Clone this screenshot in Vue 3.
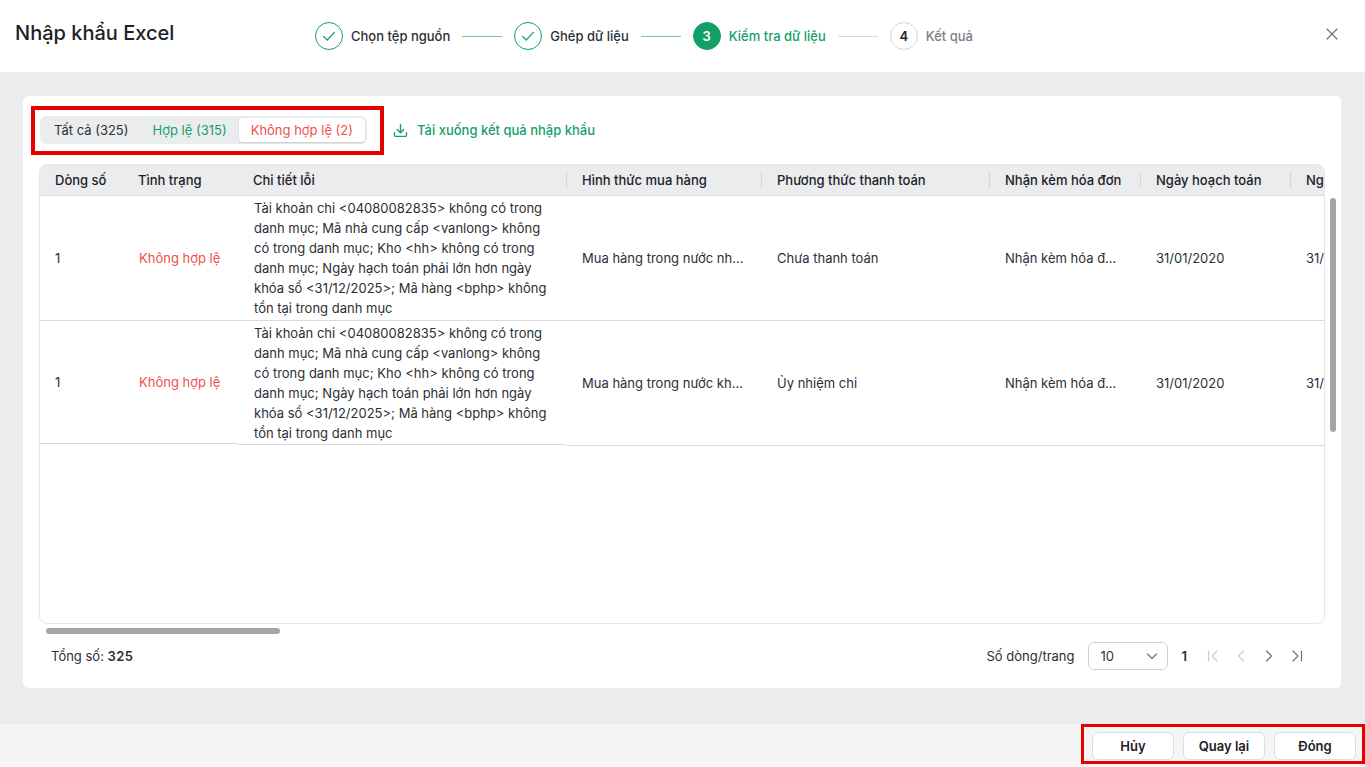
<template>
  <div class="page">
    <header class="top">
      <h1 class="title">Nhập khẩu Excel</h1>
      <div class="steps">
        <template v-for="(s, i) in steps" :key="s.label">
          <div class="step" :class="s.state">
            <span class="dot">
              <svg v-if="s.state === 'done'" width="16" height="16" viewBox="0 0 16 16" fill="none">
                <path d="M2.6 8.4l3.6 3.6 7.2-7.6" stroke="#16a06b" stroke-width="1.3" stroke-linecap="round" stroke-linejoin="round" />
              </svg>
              <template v-else>{{ i + 1 }}</template>
            </span>
            <span class="step-label">{{ s.label }}</span>
          </div>
          <span v-if="i < steps.length - 1" class="step-line" :class="s.state"></span>
        </template>
      </div>
      <button class="close" aria-label="Đóng">
        <svg width="12" height="12" viewBox="0 0 12 12" fill="none">
          <path d="M1 1l10 10M11 1L1 11" stroke="#6f737b" stroke-width="1.2" stroke-linecap="round" />
        </svg>
      </button>
    </header>

    <main class="main">
      <section class="card">
        <div class="toolbar">
          <div class="tabs">
            <span class="tab">Tất cả (325)</span>
            <span class="tab ok">Hợp lệ (315)</span>
            <span class="tab bad active">Không hợp lệ (2)</span>
          </div>
          <a class="download">
            <svg width="15" height="15" viewBox="0 0 15 15" fill="none">
              <path d="M7.5 1.5v8M4.2 6.4l3.3 3.3 3.3-3.3M1.5 9.8v2.4c0 .7.5 1.2 1.2 1.2h9.6c.7 0 1.2-.5 1.2-1.2V9.8" stroke="#16a06b" stroke-width="1.4" stroke-linecap="round" stroke-linejoin="round" />
            </svg>
            Tải xuống kết quả nhập khẩu
          </a>
        </div>

        <div class="table">
          <div class="thead">
            <div v-for="c in columns" :key="c.label" class="th" :class="{ sep: c.sep }" :style="{ width: c.width + 'px' }">
              {{ c.label }}
            </div>
          </div>
          <div v-for="(r, ri) in rows" :key="ri" class="row" :class="{ last: ri === rows.length - 1 }">
            <div class="td frozen" :style="{ width: columns[0].width + 'px' }">{{ r.line }}</div>
            <div class="td frozen invalid" :style="{ width: columns[1].width + 'px' }">{{ r.status }}</div>
            <div class="td detail" :style="{ width: columns[2].width + 'px' }">{{ errorText }}</div>
            <div class="td" :style="{ width: columns[3].width + 'px' }"><span class="clip">{{ r.buy }}</span></div>
            <div class="td" :style="{ width: columns[4].width + 'px' }"><span class="clip">{{ r.pay }}</span></div>
            <div class="td" :style="{ width: columns[5].width + 'px' }"><span class="clip">Nhận kèm hóa đơn mua hàng</span></div>
            <div class="td" :style="{ width: columns[6].width + 'px' }"><span class="clip">31/01/2020</span></div>
            <div class="td" :style="{ width: columns[7].width + 'px' }"><span class="clip">31/01/2020</span></div>
          </div>
        </div>

        <div class="pager">
          <div class="total">Tổng số: <b>325</b></div>
          <div class="pager-right">
            <span>Số dòng/trang</span>
            <div class="select">
              <span>10</span>
              <svg width="12" height="12" viewBox="0 0 12 12" fill="none">
                <path d="M1.5 4l4.5 4.5L10.500 4" stroke="#6f737b" stroke-width="1.2" stroke-linecap="round" stroke-linejoin="round" />
              </svg>
            </div>
            <b class="page-no">1</b>
            <div class="nav">
              <svg width="16" height="16" viewBox="0 0 16 16" fill="none">
                <path d="M3.500 3v10M12 3L7 8l5 5" stroke="#c9cbcf" stroke-width="1.200" stroke-linecap="round" stroke-linejoin="round" />
              </svg>
              <svg width="16" height="16" viewBox="0 0 16 16" fill="none">
                <path d="M10.500 3l-5 5 5 5" stroke="#c9cbcf" stroke-width="1.200" stroke-linecap="round" stroke-linejoin="round" />
              </svg>
              <svg width="16" height="16" viewBox="0 0 16 16" fill="none">
                <path d="M5.500 3l5 5-5 5" stroke="#6f737b" stroke-width="1.200" stroke-linecap="round" stroke-linejoin="round" />
              </svg>
              <svg width="16" height="16" viewBox="0 0 16 16" fill="none">
                <path d="M12.500 3v10M4 3l5 5-5 5" stroke="#6f737b" stroke-width="1.200" stroke-linecap="round" stroke-linejoin="round" />
              </svg>
            </div>
          </div>
        </div>

        <span class="bar-v"></span>
        <span class="bar-h"></span>
      </section>
    </main>

    <footer class="bottom">
      <button class="btn">Hủy</button>
      <button class="btn">Quay lại</button>
      <button class="btn">Đóng</button>
    </footer>

    <div class="mark mark-tabs"></div>
    <div class="mark mark-actions"></div>
  </div>
</template>

<script setup>
const steps = [
  { label: 'Chọn tệp nguồn', state: 'done' },
  { label: 'Ghép dữ liệu', state: 'done' },
  { label: 'Kiểm tra dữ liệu', state: 'current' },
  { label: 'Kết quả', state: 'todo' },
]

const columns = [
  { label: 'Dòng số', width: 83 },
  { label: 'Tình trạng', width: 115 },
  { label: 'Chi tiết lỗi', width: 328 },
  { label: 'Hình thức mua hàng', width: 195, sep: true },
  { label: 'Phương thức thanh toán', width: 228, sep: true },
  { label: 'Nhận kèm hóa đơn', width: 151, sep: true },
  { label: 'Ngày hoạch toán', width: 150, sep: true },
  { label: 'Ngày chứng từ', width: 150, sep: true },
]

const errorText =
  'Tài khoản chi <04080082835> không có trong danh mục; Mã nhà cung cấp <vanlong> không có trong danh mục; Kho <hh> không có trong danh mục; Ngày hạch toán phải lớn hơn ngày khóa sổ <31/12/2025>; Mã hàng <bphp> không tồn tại trong danh mục'

const rows = [
  { line: 1, status: 'Không hợp lệ', buy: 'Mua hàng trong nước nhập kho', pay: 'Chưa thanh toán' },
  { line: 1, status: 'Không hợp lệ', buy: 'Mua hàng trong nước không qua kho', pay: 'Ủy nhiệm chi' },
]
</script>

<style>
html,
body {
  margin: 0;
  background: #ebecee;
}
</style>

<style scoped>
.page {
  position: relative;
  display: flex;
  flex-direction: column;
  height: 767px;
  overflow: hidden;
  font-family: Inter, "Liberation Sans", sans-serif;
  font-size: 13px;
  color: #2b2f36;
}

.top {
  display: flex;
  height: 72px;
  flex: none;
  background: #fff;
  padding: 22px 27px 0 15px;
  box-sizing: border-box;
}

.title {
  width: 300px;
  margin: 0;
  font-size: 20px;
  line-height: 22px;
  font-weight: 500;
  color: #1d2128;
}

.steps {
  display: flex;
  align-items: flex-start;
  flex: 1;
}

.step {
  display: flex;
  align-items: center;
  gap: 8px;
  font-weight: 500;
}

.dot {
  display: flex;
  align-items: center;
  justify-content: center;
  width: 28px;
  height: 28px;
  box-sizing: border-box;
  border-radius: 50%;
  border: 1px solid #16a06b;
  font-weight: 600;
}

.step.current .dot {
  background: #12a066;
  color: #fff;
}

.step.todo .dot {
  border-color: #d5d6da;
  color: #1d2128;
}

.step.current .step-label {
  color: #16a06b;
}

.step.todo .step-label {
  color: #7b7f87;
}

.step-line {
  width: 40px;
  height: 1px;
  margin: 13.500px 12px 0;
  background: #d9dadd;
}

.step-line.done {
  background: #73c7a4;
}

.close {
  width: 12px;
  height: 12px;
  margin-top: 6px;
  padding: 0;
  border: none;
  background: none;
  display: flex;
}

.main {
  flex: 1;
  padding: 24px 24px 36px 23px;
  min-height: 0;
}

.card {
  position: relative;
  height: 100%;
  box-sizing: border-box;
  padding: 20px 16px 0;
  background: #fff;
  border-radius: 6px;
}

.toolbar {
  display: flex;
  align-items: center;
  height: 28px;
  gap: 26px;
}

.tabs {
  display: flex;
  align-items: center;
  height: 28px;
  box-sizing: border-box;
  padding: 2px;
  margin-left: 1px;
  border-radius: 6px;
  background: #ebecee;
}

.tab {
  padding: 0 12px;
  line-height: 24px;
  border-radius: 4px;
}

.tab.ok {
  color: #16a06b;
}

.tab.bad {
  color: #f0504a;
}

.tab.active {
  background: #fff;
  box-shadow: 0 1px 2px rgba(0, 0, 0, 0.14);
}

.download {
  display: flex;
  align-items: center;
  gap: 9px;
  color: #16a06b;
  font-weight: 500;
}

.table {
  height: 460px;
  margin-top: 20px;
  box-sizing: border-box;
  border: 1px solid #e6e7e9;
  border-radius: 8px;
  overflow: hidden;
}

.thead {
  display: flex;
  height: 31px;
  background: #ebecee;
  box-shadow: inset 0 -1px 0 #d8d9dd;
  width: max-content;
}

.th {
  position: relative;
  flex: none;
  box-sizing: border-box;
  padding: 0 15px;
  line-height: 31px;
  font-weight: 500;
  color: #1d2128;
  white-space: nowrap;
  overflow: hidden;
}

.th.sep {
  padding-left: 16px;
}

.th.sep::before {
  content: "";
  position: absolute;
  left: 0;
  top: 7px;
  bottom: 8px;
  width: 1px;
  background: #d5d6da;
}

.row {
  display: flex;
  align-items: flex-start;
  width: max-content;
}

.td {
  flex: none;
  display: flex;
  align-items: center;
  height: 125px;
  box-sizing: border-box;
  padding: 0 16px;
  border-bottom: 1px solid #d9dade;
}

.td.frozen:first-child {
  padding-left: 15px;
}

.row.last .td.frozen {
  height: 123px;
}

.row.last .td.detail {
  height: 124px;
}

.td.detail {
  line-height: 20px;
}

.invalid {
  color: #f0504a;
}

.clip {
  white-space: nowrap;
  overflow: hidden;
  text-overflow: ellipsis;
}

.pager {
  display: flex;
  align-items: center;
  justify-content: space-between;
  height: 28px;
  margin-top: 18px;
  padding: 0 20px 0 12px;
}

.total b {
  font-weight: 600;
  letter-spacing: 0.4px;
}

.pager-right {
  display: flex;
  align-items: center;
}

.select {
  display: flex;
  align-items: center;
  justify-content: space-between;
  width: 80px;
  height: 28px;
  box-sizing: border-box;
  margin-left: 13px;
  padding: 0 9px 0 12px;
  border: 1px solid #cfd1d5;
  border-radius: 6px;
}

.page-no {
  margin-left: 14px;
  font-weight: 600;
}

.nav {
  display: flex;
  gap: 12px;
  margin-left: 18px;
}

.bar-v {
  position: absolute;
  left: 1307px;
  top: 102px;
  width: 6px;
  height: 234px;
  border-radius: 3px;
  background: #a5a5a5;
}

.bar-h {
  position: absolute;
  left: 23px;
  top: 532px;
  width: 234px;
  height: 6px;
  border-radius: 3px;
  background: #a5a5a5;
}

.bottom {
  display: flex;
  justify-content: flex-end;
  gap: 9px;
  height: 43px;
  flex: none;
  box-sizing: border-box;
  padding: 8px 9px 0;
  background: #f5f5f5;
}

.btn {
  width: 82px;
  height: 28px;
  padding: 0;
  border: 1px solid #dcdde0;
  border-radius: 6px;
  background: #fff;
  font: 600 13px Inter, "Liberation Sans", sans-serif;
  color: #1d2128;
}

.mark {
  position: absolute;
  box-sizing: border-box;
  border: 4px solid #e60000;
  pointer-events: none;
}

.mark-tabs {
  left: 31px;
  top: 106px;
  width: 353px;
  height: 49px;
}

.mark-actions {
  left: 1081px;
  top: 724px;
  width: 284px;
  height: 40px;
  border-width: 3px;
}
</style>
